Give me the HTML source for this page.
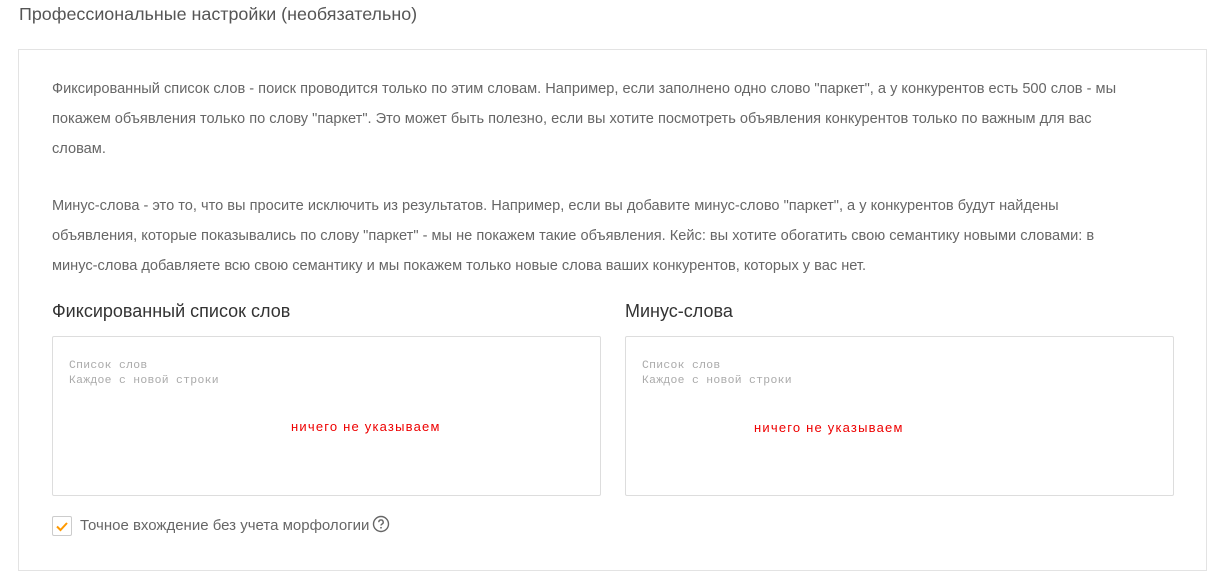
<!DOCTYPE html><html><head><meta charset="utf-8"><style>
body{margin:0;width:1215px;height:548px;overflow:hidden;background:#fff;font-family:"Liberation Sans",sans-serif;position:relative}
.a{position:absolute;white-space:nowrap}
.t{left:19px;top:4px;font-size:17.9px;color:#555}
.box{position:absolute;left:18px;top:49px;width:1187px;height:520px;border:1px solid #e3e3e3}
.p{left:52px;font-size:14.6px;color:#666;line-height:30px}
.h{font-size:18px;color:#333;top:301px}
.ta{position:absolute;top:336px;width:547px;height:158px;border:1px solid #ddd;border-radius:2px}
.ph{font-family:"Liberation Mono",monospace;font-size:11.4px;color:#aaa;line-height:15px;letter-spacing:0.3px}
.red{font-size:13px;color:#e00;letter-spacing:1.2px}
</style></head><body>
<div class="a t">Профессиональные настройки (необязательно)</div>
<div class="box"></div>
<div class="a p" style="top:74px">Фиксированный список слов - поиск проводится только по этим словам. Например, если заполнено одно слово "паркет", а у конкурентов есть 500 слов - мы<br>покажем объявления только по слову "паркет". Это может быть полезно, если вы хотите посмотреть объявления конкурентов только по важным для вас<br>словам.</div>
<div class="a p" style="top:191px">Минус-слова - это то, что вы просите исключить из результатов. Например, если вы добавите минус-слово "паркет", а у конкурентов будут найдены<br>объявления, которые показывались по слову "паркет" - мы не покажем такие объявления. Кейс: вы хотите обогатить свою семантику новыми словами: в<br>минус-слова добавляете всю свою семантику и мы покажем только новые слова ваших конкурентов, которых у вас нет.</div>
<div class="a h" style="left:52px">Фиксированный список слов</div>
<div class="a h" style="left:625px">Минус-слова</div>
<div class="ta" style="left:52px"></div><div class="ta" style="left:625px"></div>
<div class="a ph" style="left:69px;top:359px">Список слов<br>Каждое с новой строки</div>
<div class="a ph" style="left:642px;top:359px">Список слов<br>Каждое с новой строки</div>
<div class="a red" style="left:291px;top:419px">ничего не указываем</div>
<div class="a red" style="left:754px;top:420px">ничего не указываем</div>
<div class="a" style="left:52px;top:516px;width:18px;height:18px;border:1px solid #ccc;border-radius:2px"><svg width="18" height="18"><path d="M4 9.5l3.5 3.5L14 6" stroke="#f90" stroke-width="2" fill="none"/></svg></div>
<div class="a" style="left:80px;top:517px;font-size:15px;color:#666">Точное вхождение без учета морфологии</div>
<svg class="a" style="left:372px;top:515px" width="18" height="18"><circle cx="9" cy="9" r="7.5" stroke="#666" stroke-width="1.4" fill="none"/><path d="M6.8 7.2a2.2 2.2 0 1 1 3 2c-.6.3-.8.7-.8 1.3" stroke="#666" stroke-width="1.4" fill="none"/><circle cx="9" cy="12.8" r=".9" fill="#666"/></svg>
</body></html>
